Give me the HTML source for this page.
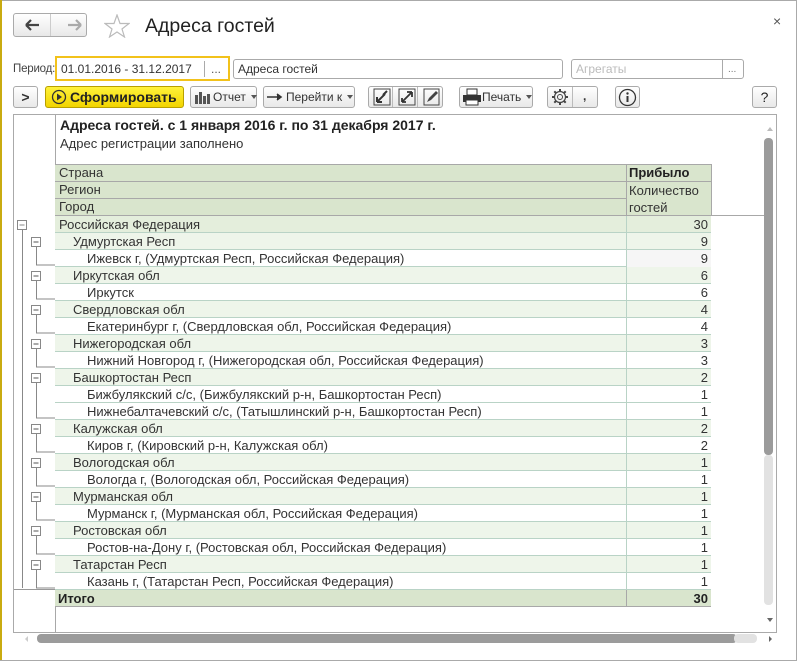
<!DOCTYPE html>
<html><head><meta charset="utf-8">
<style>
*{box-sizing:border-box;margin:0;padding:0}
body{width:797px;height:661px;overflow:hidden;background:#fff;font-family:"Liberation Sans",Arial,sans-serif;font-size:12px;color:#333;position:relative}
.a{position:absolute}
.btn{position:absolute;border:1px solid #aaa;border-radius:3px;background:linear-gradient(#fff,#e8e8e8);height:22px;font-size:12px;color:#333;line-height:20px;white-space:nowrap}
.fld{position:absolute;border:1px solid #aaa;border-radius:3px;height:20px;line-height:18px;padding-left:4px;font-size:12px;background:#fff}
.row{position:absolute;left:55px;width:656px;height:17px;line-height:17px;font-size:13px;color:#333;border-bottom:1px solid #b9d3c6}
.row .t{position:absolute;top:0;white-space:nowrap}
.row .n{position:absolute;left:571px;width:85px;top:0;text-align:right;padding-right:3px;border-left:1px solid #b9d3c6;height:17px}
.l0{background:#e4eedc}.l1{background:#eef5ea}.l2{background:#fff}
.dd::after{content:"";display:inline-block;border:3px solid transparent;border-top:4px solid #555;margin-left:5px;vertical-align:-1px}
</style></head><body>
<div class="a" style="left:0;top:0;width:2px;height:661px;background:#c9ab10"></div>
<div class="a" style="left:2px;top:0;right:0;height:1px;background:#aaa"></div>
<div class="a" style="right:0;top:0;width:1px;height:661px;background:#aaa"></div>
<div class="a" style="left:0;bottom:0;width:797px;height:1px;background:#aaa"></div>

<div class="btn" style="left:13px;top:13px;width:74px;height:24px"></div>
<div class="a" style="left:50px;top:14px;width:1px;height:22px;background:#ccc"></div>
<svg class="a" style="left:24px;top:19px" width="60" height="12"><path d="M2 6H15M2 6L7 1M2 6L7 11" stroke="#444" stroke-width="2.2" fill="none"/><path d="M44 6H57M57 6L52 1M57 6L52 11" stroke="#aaa" stroke-width="2.2" fill="none"/></svg>
<svg class="a" style="left:104px;top:14px" width="26" height="24"><path d="M13 1L16 9.5H25L18 15L20.5 23L13 18L5.5 23L8 15L1 9.5H10Z" fill="none" stroke="#bbb" stroke-width="1.2"/></svg>
<div class="a" style="left:145px;top:13px;font-size:19.5px;color:#222;line-height:26px">Адреса гостей</div>
<div class="a" style="left:773px;top:13px;font-size:14px;color:#555">×</div>

<div class="a" style="left:13px;top:63px;font-size:11.5px;color:#444;letter-spacing:-0.2px">Период:</div>
<div class="a" style="left:55px;top:56px;width:175px;height:25px;border:2px solid #f2c21b;background:#fff"></div>
<div class="a" style="left:61px;top:62px;font-size:12px;color:#333">01.01.2016 - 31.12.2017</div>
<div class="a" style="left:204px;top:61px;width:1px;height:16px;background:#aaa"></div>
<div class="a" style="left:211px;top:62px;color:#555">...</div>
<div class="fld" style="left:233px;top:59px;width:330px">Адреса гостей</div>
<div class="fld" style="left:571px;top:59px;width:173px;color:#bbb">Агрегаты</div>
<div class="a" style="left:722px;top:60px;width:1px;height:18px;background:#aaa"></div>
<div class="a" style="left:728px;top:64px;color:#777;font-size:10px">...</div>

<div class="btn" style="left:13px;top:86px;width:25px;text-align:center;font-weight:bold;font-size:14px">&gt;</div>
<div class="btn" style="left:45px;top:86px;width:139px;background:linear-gradient(#fff23a,#f2d400);border-color:#b8a000;font-weight:bold;font-size:14px;color:#222;padding-left:24px">Сформировать</div>
<svg class="a" style="left:51px;top:89px" width="16" height="16"><circle cx="8" cy="8" r="6.5" fill="none" stroke="#333" stroke-width="1.3"/><path d="M6 4.5L11 8L6 11.5Z" fill="#333"/></svg>
<div class="btn dd" style="left:190px;top:86px;width:67px;padding-left:22px">Отчет</div>
<svg class="a" style="left:194px;top:91px" width="18" height="13"><path d="M1 13V4h3v9M5 13V1h3v12M9 13V5h3v8M13 13V3h3v10" fill="#555"/></svg>
<div class="btn dd" style="left:263px;top:86px;width:92px;padding-left:22px">Перейти к</div>
<svg class="a" style="left:267px;top:93px" width="16" height="8"><path d="M0 4H13M10 1L14 4L10 7" stroke="#333" stroke-width="1.6" fill="#333"/></svg>
<div class="btn" style="left:368px;top:86px;width:75px"></div>
<div class="a" style="left:392px;top:87px;width:1px;height:20px;background:#bbb"></div>
<div class="a" style="left:417px;top:87px;width:1px;height:20px;background:#bbb"></div>
<svg class="a" style="left:371px;top:88px" width="70" height="18"><rect x="3" y="1" width="16" height="16" fill="none" stroke="#444"/><path d="M6 14L14 6M6 14V9M6 14H11M16 3L12 7" stroke="#333" stroke-width="2"/><rect x="28" y="1" width="16" height="16" fill="none" stroke="#444"/><path d="M31 14L41 4M41 4H36M41 4V9M31 14V10M31 14H35" stroke="#333" stroke-width="1.8"/><rect x="53" y="1" width="15" height="16" fill="none" stroke="#444"/><path d="M56 14L58 10L65 3L67 5L60 12Z" fill="#444"/></svg>
<div class="btn dd" style="left:459px;top:86px;width:74px;padding-left:22px">Печать</div>
<svg class="a" style="left:462px;top:88px" width="20" height="18"><rect x="5" y="1" width="10" height="6" fill="#fff" stroke="#333"/><rect x="1" y="7" width="18" height="7" fill="#333"/><rect x="4" y="12" width="12" height="5" fill="#fff" stroke="#333"/></svg>
<div class="btn" style="left:547px;top:86px;width:51px"></div>
<div class="a" style="left:572px;top:87px;width:1px;height:20px;background:#bbb"></div>
<svg class="a" style="left:551px;top:88px" width="18" height="18"><circle cx="9" cy="9" r="5.5" fill="none" stroke="#444" stroke-width="1.2"/><circle cx="9" cy="9" r="2.5" fill="none" stroke="#444"/><path d="M9 1V3.5M9 14.5V17M1 9H3.5M14.5 9H17M3.3 3.3L5 5M13 13L14.7 14.7M3.3 14.7L5 13M13 5L14.7 3.3" stroke="#444" stroke-width="2"/></svg>
<div class="a" style="left:583px;top:89px;font-weight:bold;color:#333">,</div>
<div class="btn" style="left:615px;top:86px;width:25px"></div>
<svg class="a" style="left:618px;top:88px" width="19" height="19"><circle cx="9.5" cy="9.5" r="8" fill="none" stroke="#333" stroke-width="1.3"/><rect x="8.5" y="8" width="2" height="6" fill="#333"/><circle cx="9.5" cy="5.5" r="1.2" fill="#333"/></svg>
<div class="btn" style="left:752px;top:86px;width:25px;text-align:center;font-size:14px;color:#222">?</div>

<div class="a" style="left:13px;top:114px;width:764px;height:519px;border:1px solid #aaa"></div>
<div class="a" style="left:55px;top:115px;width:1px;height:517px;background:#a8a8a8"></div>
<div class="a" style="left:14px;top:589px;width:41px;height:1px;background:#999"></div>
<div class="a" style="left:60px;top:117px;font-weight:bold;font-size:14px;color:#222">Адреса гостей. с 1 января 2016 г. по 31 декабря 2017 г.</div>
<div class="a" style="left:60px;top:136px;font-size:13px;color:#333">Адрес регистрации заполнено</div>

<div class="a" style="left:55px;top:164px;width:657px;height:52px;background:#d9e5cd;border:1px solid #a8a8a8;border-left:none"></div>
<div class="a" style="left:55px;top:181px;width:571px;height:1px;background:#a8a8a8"></div>
<div class="a" style="left:55px;top:198px;width:571px;height:1px;background:#a8a8a8"></div>
<div class="a" style="left:626px;top:181px;width:86px;height:1px;background:#a8a8a8"></div>
<div class="a" style="left:626px;top:164px;width:1px;height:52px;background:#a8a8a8"></div>
<div class="a" style="left:711px;top:215px;width:53px;height:1px;background:#a8a8a8"></div>
<div class="a" style="left:59px;top:165px;font-size:13px">Страна</div>
<div class="a" style="left:59px;top:182px;font-size:13px">Регион</div>
<div class="a" style="left:59px;top:199px;font-size:13px">Город</div>
<div class="a" style="left:629px;top:165px;font-weight:bold;color:#222;font-size:13px">Прибыло</div>
<div class="a" style="left:629px;top:182px;line-height:17px;font-size:13px">Количество<br>гостей</div>

<div class="row l0" style="top:216px"><span class="t" style="left:4px">Российская Федерация</span><span class="n">30</span></div>
<div class="row l1" style="top:233px"><span class="t" style="left:18px">Удмуртская Респ</span><span class="n">9</span></div>
<div class="row l2" style="top:250px"><span class="t" style="left:32px">Ижевск г, (Удмуртская Респ, Российская Федерация)</span><span class="n" style="background:#f6f6f6">9</span></div>
<div class="row l1" style="top:267px"><span class="t" style="left:18px">Иркутская обл</span><span class="n">6</span></div>
<div class="row l2" style="top:284px"><span class="t" style="left:32px">Иркутск</span><span class="n">6</span></div>
<div class="row l1" style="top:301px"><span class="t" style="left:18px">Свердловская обл</span><span class="n">4</span></div>
<div class="row l2" style="top:318px"><span class="t" style="left:32px">Екатеринбург г, (Свердловская обл, Российская Федерация)</span><span class="n">4</span></div>
<div class="row l1" style="top:335px"><span class="t" style="left:18px">Нижегородская обл</span><span class="n">3</span></div>
<div class="row l2" style="top:352px"><span class="t" style="left:32px">Нижний Новгород г, (Нижегородская обл, Российская Федерация)</span><span class="n">3</span></div>
<div class="row l1" style="top:369px"><span class="t" style="left:18px">Башкортостан Респ</span><span class="n">2</span></div>
<div class="row l2" style="top:386px"><span class="t" style="left:32px">Бижбулякский с/с, (Бижбулякский р-н, Башкортостан Респ)</span><span class="n">1</span></div>
<div class="row l2" style="top:403px"><span class="t" style="left:32px">Нижнебалтачевский с/с, (Татышлинский р-н, Башкортостан Респ)</span><span class="n">1</span></div>
<div class="row l1" style="top:420px"><span class="t" style="left:18px">Калужская обл</span><span class="n">2</span></div>
<div class="row l2" style="top:437px"><span class="t" style="left:32px">Киров г, (Кировский р-н, Калужская обл)</span><span class="n">2</span></div>
<div class="row l1" style="top:454px"><span class="t" style="left:18px">Вологодская обл</span><span class="n">1</span></div>
<div class="row l2" style="top:471px"><span class="t" style="left:32px">Вологда г, (Вологодская обл, Российская Федерация)</span><span class="n">1</span></div>
<div class="row l1" style="top:488px"><span class="t" style="left:18px">Мурманская обл</span><span class="n">1</span></div>
<div class="row l2" style="top:505px"><span class="t" style="left:32px">Мурманск г, (Мурманская обл, Российская Федерация)</span><span class="n">1</span></div>
<div class="row l1" style="top:522px"><span class="t" style="left:18px">Ростовская обл</span><span class="n">1</span></div>
<div class="row l2" style="top:539px"><span class="t" style="left:32px">Ростов-на-Дону г, (Ростовская обл, Российская Федерация)</span><span class="n">1</span></div>
<div class="row l1" style="top:556px"><span class="t" style="left:18px">Татарстан Респ</span><span class="n">1</span></div>
<div class="row l2" style="top:573px"><span class="t" style="left:32px">Казань г, (Татарстан Респ, Российская Федерация)</span><span class="n">1</span></div>
<div class="row" style="top:590px;background:#d9e5cd;font-weight:bold;color:#222;border-bottom:1px solid #a8a8a8"><span class="t" style="left:3px">Итого</span><span class="n" style="border-left-color:#a8a8a8">30</span></div>

<svg class="a" style="left:0;top:0" width="60" height="640">
<g stroke="#888" fill="#fff" stroke-width="1" shape-rendering="crispEdges">
<path d="M22.5 229V588" fill="none"/>
<rect x="17.5" y="220.5" width="9" height="9"/><path d="M19.5 225H24.5"/>
<path d="M36.5 246V265H55M36.5 280V299H55M36.5 314V333H55M36.5 348V367H55M36.5 382V418H55M36.5 433V452H55M36.5 467V486H55M36.5 501V520H55M36.5 535V554H55M36.5 569V588H55" fill="none"/>
<g>
<rect x="31.5" y="237.5" width="9" height="9"/><rect x="31.5" y="271.5" width="9" height="9"/><rect x="31.5" y="305.5" width="9" height="9"/><rect x="31.5" y="339.5" width="9" height="9"/><rect x="31.5" y="373.5" width="9" height="9"/><rect x="31.5" y="424.5" width="9" height="9"/><rect x="31.5" y="458.5" width="9" height="9"/><rect x="31.5" y="492.5" width="9" height="9"/><rect x="31.5" y="526.5" width="9" height="9"/><rect x="31.5" y="560.5" width="9" height="9"/>
</g>
<path d="M33.5 242H38.5M33.5 276H38.5M33.5 310H38.5M33.5 344H38.5M33.5 378H38.5M33.5 429H38.5M33.5 463H38.5M33.5 497H38.5M33.5 531H38.5M33.5 565H38.5" fill="none" stroke="#555"/>
</g></svg>

<div class="a" style="left:767px;top:124px;width:0;height:0;border:3px solid transparent;border-bottom:4px solid #bbb"></div>
<div class="a" style="left:764px;top:138px;width:9px;height:317px;background:#9b9b9b;border-radius:4px"></div>
<div class="a" style="left:764px;top:455px;width:9px;height:150px;background:#e2e2e2;border-radius:4px"></div>
<div class="a" style="left:767px;top:618px;width:0;height:0;border:3px solid transparent;border-top:4px solid #666"></div>
<div class="a" style="left:37px;top:634px;width:700px;height:9px;background:#9b9b9b;border-radius:4px"></div>
<div class="a" style="left:734px;top:634px;width:23px;height:9px;background:#e2e2e2;border-radius:4px"></div>
<div class="a" style="left:22px;top:636px;width:0;height:0;border:3px solid transparent;border-right:3px solid #ccc"></div>
<div class="a" style="left:769px;top:636px;width:0;height:0;border:3px solid transparent;border-left:3px solid #666"></div>
</body></html>
